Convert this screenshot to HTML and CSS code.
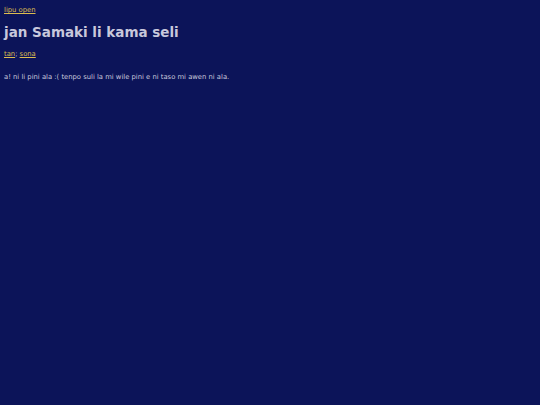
FILE: index.html
```html
<!DOCTYPE html>
<html>
<head>
<meta charset="utf-8">
<link rel="stylesheet" href="styles.css">
</head>
<body>
<nav class="top"><a href="#">lipu open</a></nav>
<h1 class="title">jan Samaki li kama seli</h1>
<p class="tags"><a href="#">tan</a>; <a href="#">sona</a></p>
<p class="text">a! ni li pini ala :( tenpo suli la mi wile pini e ni taso mi awen ni ala.</p>
</body>
</html>
```
FILE: styles.css
```css
html, body {
  margin: 0;
  background: #0c1459;
}
body {
  padding: 3px 4px;
  font-family: "DejaVu Sans", sans-serif;
  font-size: 6.8px;
  color: #c8c8dc;
}
a {
  color: #dcbc50;
}
.top {
  margin-top: 3px;
}
.title {
  font-size: 13.5px;
  margin: 10px 0 0 0;
  color: #c8c8dc;
}
.tags {
  margin: 10px 0 0 0;
}
.text {
  margin: 15px 0 0 0;
}
```
